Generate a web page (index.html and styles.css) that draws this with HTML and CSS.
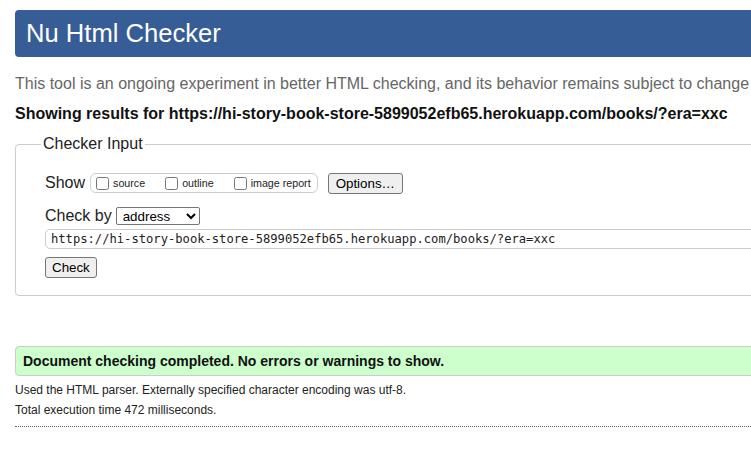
FILE: index.html
```html
<!DOCTYPE html>
<html lang="en">
<head>
<meta charset="utf-8">
<title>Nu Html Checker</title>
<link rel="stylesheet" href="styles.css">
</head>
<body>
<div class="page">
  <h1 class="banner">Nu Html Checker</h1>
  <p class="intro">This tool is an ongoing experiment in better HTML checking, and its behavior remains subject to change</p>
  <p class="showing">Showing results for https://hi-story-book-store-5899052efb65.herokuapp.com/books/?era=xxc</p>
  <fieldset class="input-box">
    <legend class="legend">Checker Input</legend>
    <div class="row row-show">
      <span class="label">Show</span>
      <span class="opts">
        <label class="opt"><input type="checkbox" class="cb">source</label>
        <label class="opt"><input type="checkbox" class="cb">outline</label>
        <label class="opt opt-last"><input type="checkbox" class="cb">image report</label>
      </span>
      <button class="btn btn-options" type="button">Options…</button>
    </div>
    <div class="row row-by">
      <span class="label">Check by</span>
      <select class="sel"><option>address</option></select>
    </div>
    <div class="row row-url">
      <input class="url" type="text" value="https://hi-story-book-store-5899052efb65.herokuapp.com/books/?era=xxc">
    </div>
    <div class="row row-check">
      <button class="btn btn-check" type="button">Check</button>
    </div>
  </fieldset>
  <div class="success">Document checking completed. No errors or warnings to show.</div>
  <p class="details">Used the HTML parser. Externally specified character encoding was utf-8.</p>
  <p class="details">Total execution time 472 milliseconds.</p>
  <div class="rule"></div>
</div>
</body>
</html>
```
FILE: styles.css
```css
html, body {
  margin: 0;
  padding: 0;
  overflow: hidden;
  background: #fff;
}
body {
  font-family: "Liberation Sans", Arial, sans-serif;
  color: #222;
}
.page {
  width: 1000px;
  padding: 10px 0 0 15px;
  white-space: nowrap;
}
.banner {
  margin: 0;
  height: 47px;
  line-height: 47px;
  background: #365d95;
  color: #fff;
  font-size: 25.6px;
  font-weight: normal;
  padding-left: 11px;
  border-radius: 4px;
}
.intro {
  margin: 17px 0 0;
  font-size: 16px;
  line-height: 20px;
  color: #666;
}
.showing {
  margin: 10px 0 0;
  font-size: 16px;
  line-height: 20px;
  font-weight: bold;
  color: #111;
}
.input-box {
  margin: 10px 0 0;
  padding: 0 0 17px 29px;
  border: 1px solid #ccc;
  border-radius: 4px;
  min-width: 0;
}
.legend {
  font-size: 16px;
  line-height: 20px;
  padding: 0 2px;
  margin-left: -4px;
  color: #222;
}
.row {
  display: flex;
  align-items: center;
}
.label {
  font-size: 16px;
  line-height: 20px;
}
.row-show {
  margin-top: 19px;
  height: 20px;
}
.opts {
  display: flex;
  align-items: center;
  margin-left: 5px;
  height: 18px;
  border: 1px solid #ccc;
  border-radius: 6px;
  padding: 0 6px 0 5px;
}
.opt {
  display: flex;
  align-items: center;
  font-size: 10.7px;
  margin-right: 20px;
  color: #222;
}
.opt-last {
  margin-right: 0;
}
.cb {
  margin: 0 4px 0 0;
  width: 13px;
  height: 13px;
}
.btn {
  font-family: "Liberation Sans", Arial, sans-serif;
  font-size: 13.333px;
  background: #efefef;
  border: 1px solid #767676;
  border-radius: 3px;
  color: #000;
  height: 21px;
  padding: 0 6px;
}
.btn-options {
  margin-left: 10px;
  padding: 0 7px;
}
.row-by {
  margin-top: 14px;
  height: 17px;
}
.sel {
  margin-left: 4px;
  font-family: "Liberation Sans", Arial, sans-serif;
  font-size: 13.333px;
  height: 18px;
  width: 84px;
  border: 1px solid #767676;
  border-radius: 2px;
  background: #fff;
  color: #000;
  padding: 0 0 0 2px;
}
.row-url {
  margin-top: 5px;
}
.url {
  width: 900px;
  height: 20px;
  box-sizing: border-box;
  border: 1px solid #ccc;
  border-radius: 5px;
  padding: 0 5px;
  font-family: "DejaVu Sans Mono", "Liberation Mono", monospace;
  font-size: 12.15px;
  color: #222;
  outline: none;
}
.row-check {
  margin-top: 8px;
}
.success {
  margin-top: 50px;
  height: 30px;
  box-sizing: border-box;
  border: 1px solid #ccc;
  border-radius: 4px;
  background: #ccffcc;
  padding-left: 7px;
  font-size: 14px;
  font-weight: bold;
  color: #111;
  display: flex;
  align-items: center;
}
.details {
  margin: 0;
  font-size: 12px;
  line-height: 20px;
  color: #222;
}
.success + .details {
  margin-top: 4px;
}
.rule {
  margin-top: 6px;
  border-top: 1px dotted #666;
}
```
